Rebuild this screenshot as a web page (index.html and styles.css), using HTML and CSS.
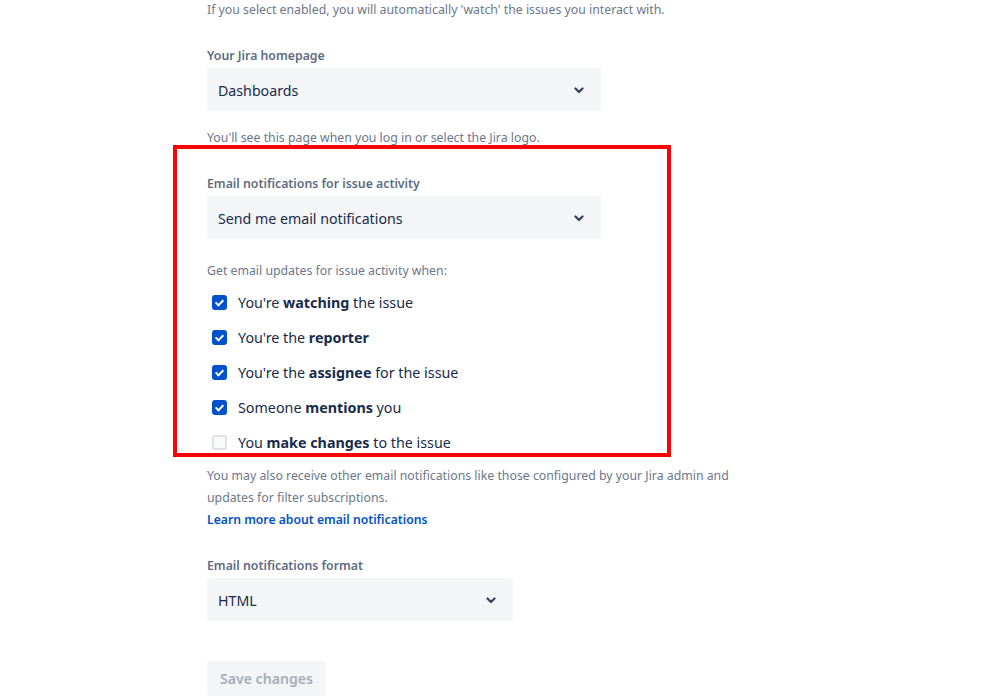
FILE: index.html
```html
<!DOCTYPE html>
<html lang="en">
<head>
  <meta charset="UTF-8">
  <title>Personal settings</title>
  <link rel="stylesheet" href="styles.css">
</head>
<body>
<div class="page">
  <p class="help first">If you select enabled, you will automatically 'watch' the issues you interact with.</p>

  <div class="field">
    <label class="label">Your Jira homepage</label>
    <div class="select">
      <span>Dashboards</span>
      <svg class="chevron" width="10" height="7" viewBox="0 0 10 7"><path d="M1.5 1.5 L5 5 L8.5 1.5" fill="none" stroke="#344563" stroke-width="2.2" stroke-linecap="round" stroke-linejoin="round"/></svg>
    </div>
    <p class="help after-select">You'll see this page when you log in or select the Jira logo.</p>
  </div>

  <div class="field notify">
    <label class="label">Email notifications for issue activity</label>
    <div class="select">
      <span>Send me email notifications</span>
      <svg class="chevron" width="10" height="7" viewBox="0 0 10 7"><path d="M1.5 1.5 L5 5 L8.5 1.5" fill="none" stroke="#344563" stroke-width="2.2" stroke-linecap="round" stroke-linejoin="round"/></svg>
    </div>
    <p class="help when">Get email updates for issue activity when:</p>

    <div class="checks">
      <div class="check"><span class="box on"></span><span>You're <b>watching</b> the issue</span></div>
      <div class="check"><span class="box on"></span><span>You're the <b>reporter</b></span></div>
      <div class="check"><span class="box on"></span><span>You're the <b>assignee</b> for the issue</span></div>
      <div class="check"><span class="box on"></span><span>Someone <b>mentions</b> you</span></div>
      <div class="check"><span class="box"></span><span>You <b>make changes</b> to the issue</span></div>
    </div>

    <p class="help more">You may also receive other email notifications like those configured by your Jira admin and updates for filter subscriptions.</p>
    <a class="link" href="#">Learn more about email notifications</a>
  </div>

  <div class="field format">
    <label class="label">Email notifications format</label>
    <div class="select small">
      <span>HTML</span>
      <svg class="chevron" width="10" height="7" viewBox="0 0 10 7"><path d="M1.5 1.5 L5 5 L8.5 1.5" fill="none" stroke="#344563" stroke-width="2.2" stroke-linecap="round" stroke-linejoin="round"/></svg>
    </div>
  </div>

  <button class="save" disabled>Save changes</button>
</div>

<div class="highlight"></div>
</body>
</html>
```

FILE: styles.css
```css
* {
  margin: 0;
  padding: 0;
  box-sizing: border-box;
}

body {
  background: #fff;
  font-family: "Noto Sans", "Open Sans", sans-serif;
  color: #172b4d;
  overflow: hidden;
}

.page {
  padding-left: 207px;
  width: 760px;
}

.help {
  font-size: 12.3px;
  line-height: 20px;
  color: #6b778c;
}

.field {
  margin-top: 26px;
}

.label {
  display: block;
  font-size: 12.3px;
  font-weight: 600;
  line-height: 20px;
  color: #5e6c84;
  margin-bottom: 2px;
}

.select {
  width: 394px;
  height: 43px;
  background: #f4f5f7;
  border-radius: 3px;
  display: flex;
  align-items: center;
  justify-content: space-between;
  padding: 1px 17px 0 11px;
  font-size: 14.2px;
  color: #172b4d;
}

.select.small {
  width: 306px;
}

.after-select {
  margin-top: 17px;
}

.notify {
  margin-top: 26px;
}

.when {
  margin-top: 22px;
}

.checks {
  margin-top: 4px;
}

.check {
  height: 35px;
  display: flex;
  align-items: center;
  font-size: 14.3px;
  color: #172b4d;
}

.check b {
  font-weight: 700;
}

.box {
  width: 15px;
  height: 15px;
  margin-left: 5px;
  margin-right: 11px;
  border-radius: 3px;
  border: 2px solid #dfe1e6;
  background: #fafbfc;
  position: relative;
}

.box.on {
  background: #0052cc;
  border-color: #0052cc;
}

.box.on::after {
  content: "";
  position: absolute;
  left: 3px;
  top: 1px;
  width: 3px;
  height: 6px;
  border-right: 2px solid #fff;
  border-bottom: 2px solid #fff;
  transform: rotate(45deg);
}

.more {
  margin-top: 5px;
  line-height: 22px;
  width: 540px;
}

.link {
  display: block;
  font-size: 12.2px;
  line-height: 22px;
  font-weight: 600;
  color: #0052cc;
  text-decoration: none;
}

.format {
  margin-top: 25px;
}

.save {
  margin-top: 40px;
  height: 35px;
  padding: 0 13px;
  border: none;
  border-radius: 3px;
  background: #f4f5f7;
  color: #a5adba;
  font-family: inherit;
  font-size: 14.1px;
  font-weight: 600;
}

.highlight {
  position: absolute;
  left: 173px;
  top: 145px;
  width: 498px;
  height: 312px;
  border: 4px solid #ff0000;
}
```
